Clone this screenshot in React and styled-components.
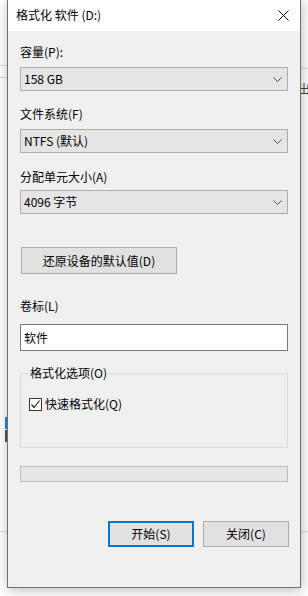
import React from 'react';
import styled, { createGlobalStyle } from 'styled-components';

const GlobalStyle = createGlobalStyle`
  body {
    margin: 0;
    background: #fff;
    font-family: "Noto Sans CJK SC", "Microsoft YaHei", "Noto Sans", sans-serif;
    font-size: 12px;
    color: #000;
  }
`;

function Chevron() {
  return (
    <svg width="9" height="5" viewBox="0 0 9 5">
      <path d="M0.5 0.5 L4.5 4.5 L8.5 0.5" fill="none" stroke="#4a4a4a" strokeWidth="1" />
    </svg>
  );
}

function CloseIcon() {
  return (
    <svg width="11" height="11" viewBox="0 0 11 11">
      <path d="M0.5 0.5 L10.5 10.5 M10.5 0.5 L0.5 10.5" stroke="#000" strokeWidth="1" />
    </svg>
  );
}

function CheckIcon() {
  return (
    <svg width="11" height="11" viewBox="0 0 11 11">
      <path d="M1.5 5.5 L4 8.5 L9.5 1.5" fill="none" stroke="#222" strokeWidth="1.2" />
    </svg>
  );
}

function App() {
  return (
    <Desktop>
      <GlobalStyle />
      <BgLine top={65} left={0} width={8} />
      <BgLine top={77} left={0} width={8} />
      <BgLine top={68} left={300} width={8} />
      <BgLine top={531} left={0} width={308} />
      <BgGlyph>出</BgGlyph>
      <BgMark top={417} color="#1a8ad4" />
      <BgMark top={430} color="#555" />

      <Window>
        <TitleBar>
          <Title>格式化 软件 (D:)</Title>
          <CloseButton>
            <CloseIcon />
          </CloseButton>
        </TitleBar>

        <Body>
          <Label gap={0}>容量(P):</Label>
          <Combo gap={7}>
            <span>158 GB</span>
            <Chevron />
          </Combo>

          <Label gap={15}>文件系统(F)</Label>
          <Combo gap={7}>
            <span>NTFS (默认)</span>
            <Chevron />
          </Combo>

          <Label gap={16}>分配单元大小(A)</Label>
          <Combo gap={5}>
            <span>4096 字节</span>
            <Chevron />
          </Combo>

          <RestoreButton>还原设备的默认值(D)</RestoreButton>

          <Label gap={24}>卷标(L)</Label>
          <TextBox>软件</TextBox>

          <Group>
            <Legend>格式化选项(O)</Legend>
            <CheckRow>
              <CheckBox>
                <CheckIcon />
              </CheckBox>
              <span>快速格式化(Q)</span>
            </CheckRow>
          </Group>

          <Progress />

          <Actions>
            <DialogButton primary>开始(S)</DialogButton>
            <DialogButton>关闭(C)</DialogButton>
          </Actions>
        </Body>
      </Window>
    </Desktop>
  );
}

export default App;

const Desktop = styled.div`
  position: relative;
  width: 308px;
  height: 596px;
  overflow: hidden;
  background: #fff;
`;

const BgLine = styled.div`
  position: absolute;
  top: ${(p) => p.top}px;
  left: ${(p) => p.left}px;
  width: ${(p) => p.width}px;
  height: 1px;
  background: #dadada;
`;

const BgGlyph = styled.div`
  position: absolute;
  top: 81px;
  left: 298px;
  font-size: 12px;
  line-height: 16px;
  color: #444;
`;

const BgMark = styled.div`
  position: absolute;
  top: ${(p) => p.top}px;
  left: 5px;
  width: 3px;
  height: 12px;
  background: ${(p) => p.color};
`;

const Window = styled.div`
  position: absolute;
  top: -1px;
  left: 7px;
  width: 292px;
  border: 1px solid #6f6f6f;
  background: #f0f0f0;
  box-shadow: 1px 2px 12px rgba(0, 0, 0, 0.28);
  display: flex;
  flex-direction: column;
`;

const TitleBar = styled.div`
  height: 31px;
  background: #fff;
  display: flex;
  align-items: center;
  justify-content: space-between;
  padding-left: 8px;
`;

const Title = styled.div`
  line-height: 16px;
  margin-top: -1px;
`;

const CloseButton = styled.div`
  width: 46px;
  height: 31px;
  display: flex;
  align-items: center;
  justify-content: center;
  margin-right: -6px;
`;

const Body = styled.div`
  display: flex;
  flex-direction: column;
  padding: 13px 12px 40px 12px;
`;

const Label = styled.div`
  line-height: 16px;
  margin-top: ${(p) => p.gap}px;
`;

const Combo = styled.div`
  box-sizing: border-box;
  height: 24px;
  margin-top: ${(p) => p.gap}px;
  background: #e5e5e5;
  border: 1px solid #adadad;
  display: flex;
  align-items: center;
  justify-content: space-between;
  padding: 0 5px 0 3px;
  line-height: 16px;
`;

const RestoreButton = styled.div`
  box-sizing: border-box;
  width: 156px;
  height: 27px;
  margin-top: 33px;
  margin-left: 1px;
  background: #e1e1e1;
  border: 1px solid #adadad;
  display: flex;
  align-items: center;
  justify-content: center;
  line-height: 16px;
`;

const TextBox = styled.div`
  box-sizing: border-box;
  height: 27px;
  margin-top: 10px;
  background: #fff;
  border: 1px solid #7a7a7a;
  display: flex;
  align-items: center;
  padding-left: 3px;
  line-height: 16px;
`;

const Group = styled.fieldset`
  margin: 14px 0 0 0;
  padding: 0 0 35px 8px;
  border: 1px solid #dcdcdc;
  min-width: 0;
`;

const Legend = styled.legend`
  padding: 0 1px;
  line-height: 16px;
`;

const CheckRow = styled.div`
  display: flex;
  align-items: center;
  gap: 3px;
  margin-top: 15px;
  line-height: 16px;
`;

const CheckBox = styled.div`
  box-sizing: border-box;
  width: 13px;
  height: 13px;
  border: 1px solid #333;
  background: #fff;
  display: flex;
  align-items: center;
  justify-content: center;
`;

const Progress = styled.div`
  box-sizing: border-box;
  height: 16px;
  margin-top: 18px;
  background: #e6e6e6;
  border: 1px solid #bcbcbc;
`;

const Actions = styled.div`
  display: flex;
  justify-content: flex-end;
  gap: 9px;
  margin-top: 39px;
  margin-right: -1px;
`;

const DialogButton = styled.div`
  box-sizing: border-box;
  width: 86px;
  height: 26px;
  background: #e1e1e1;
  border: ${(p) => (p.primary ? '2px solid #0078d7' : '1px solid #adadad')};
  display: flex;
  align-items: center;
  justify-content: center;
  line-height: 16px;
`;
